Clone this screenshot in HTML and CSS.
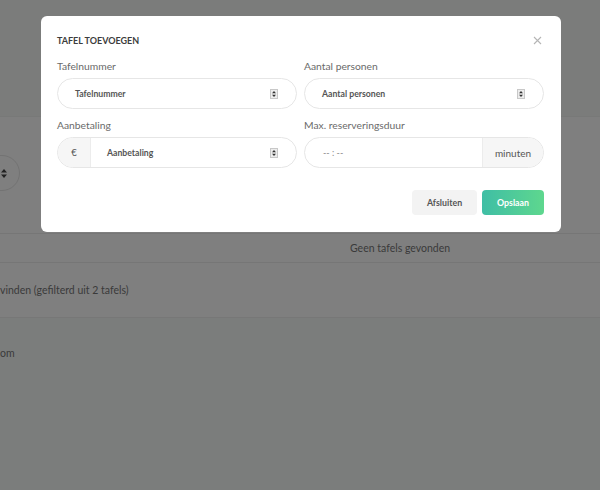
FILE: index.html
```html
<!DOCTYPE html>
<html lang="nl">
<head>
<meta charset="utf-8">
<title>Tafel toevoegen</title>
<link rel="stylesheet" href="styles.css">
</head>
<body>
<div class="page">
  <div class="band band-top"></div>
  <div class="band band-filter">
    <div class="sort-circle">
      <svg width="6" height="9" viewBox="0 0 6 9"><path d="M3 0L6 3.5H0Z M3 9L0 5.5H6Z" fill="#222"/></svg>
    </div>
  </div>
  <div class="row row-empty"><span class="empty-text">Geen tafels gevonden</span></div>
  <div class="row row-info"><span>vinden (gefilterd uit 2 tafels)</span></div>
  <div class="row-foot"><span>om</span></div>
</div>

<div class="modal">
  <div class="modal-head">
    <h2 class="modal-title">TAFEL TOEVOEGEN</h2>
    <span class="close">
      <svg width="9" height="9" viewBox="0 0 9 9"><path d="M1 1L8 8M8 1L1 8" stroke="#b5b5b5" stroke-width="1.1"/></svg>
    </span>
  </div>
  <div class="form-grid">
    <div class="field">
      <label class="label">Tafelnummer</label>
      <div class="input">
        <span class="value">Tafelnummer</span>
        <span class="spin"><svg width="8" height="10" viewBox="0 0 8 10"><rect x="0.5" y="0.5" width="7" height="9" fill="#ececec" stroke="#c8c8c8"/><path d="M4 2L6 4.2H2Z M4 8L2 5.8H6Z" fill="#333"/></svg></span>
      </div>
    </div>
    <div class="field">
      <label class="label">Aantal personen</label>
      <div class="input">
        <span class="value">Aantal personen</span>
        <span class="spin"><svg width="8" height="10" viewBox="0 0 8 10"><rect x="0.5" y="0.5" width="7" height="9" fill="#ececec" stroke="#c8c8c8"/><path d="M4 2L6 4.2H2Z M4 8L2 5.8H6Z" fill="#333"/></svg></span>
      </div>
    </div>
    <div class="field">
      <label class="label">Aanbetaling</label>
      <div class="input group">
        <span class="addon addon-left">€</span>
        <span class="value value-addon">Aanbetaling</span>
        <span class="spin"><svg width="8" height="10" viewBox="0 0 8 10"><rect x="0.5" y="0.5" width="7" height="9" fill="#ececec" stroke="#c8c8c8"/><path d="M4 2L6 4.2H2Z M4 8L2 5.8H6Z" fill="#333"/></svg></span>
      </div>
    </div>
    <div class="field">
      <label class="label">Max. reserveringsduur</label>
      <div class="input group">
        <span class="value value-time">-- : --</span>
        <span class="addon addon-right">minuten</span>
      </div>
    </div>
  </div>
  <div class="actions">
    <button class="btn btn-close">Afsluiten</button>
    <button class="btn btn-save">Opslaan</button>
  </div>
</div>
</body>
</html>
```

FILE: styles.css
```css
* { box-sizing: border-box; }
html, body { margin: 0; padding: 0; }
body {
  width: 600px;
  height: 490px;
  overflow: hidden;
  background: #7b7d7c;
  font-family: Lato, "Open Sans", Arial, sans-serif;
  position: relative;
}
.page { display: flex; flex-direction: column; }
.band-top { height: 117px; background: #7b7c7b; border-bottom: 1px solid #787978; }
.band-filter {
  height: 116px;
  background: #7f7f7f;
  display: flex;
  align-items: flex-start;
  padding-top: 38px;
}
.sort-circle {
  width: 40px;
  height: 36px;
  margin-left: -20px;
  border: 1px solid #737373;
  border-radius: 18px;
  display: flex;
  align-items: center;
  justify-content: flex-end;
  padding-right: 12px;
}
.row {
  border-top: 1px solid #767676;
  background: #7f7f7f;
  color: #3a3a3a;
  font-size: 10.5px;
  display: flex;
  align-items: center;
}
.row-empty { height: 29px; padding-left: 350px; }
.row-info { height: 56px; border-bottom: 1px solid #777; }
.row-foot {
  color: #3a3a3a;
  font-size: 10.5px;
  padding-top: 29px;
}

.modal {
  position: absolute;
  left: 41px;
  top: 16px;
  width: 520px;
  height: 216px;
  background: #fff;
  border-radius: 6px;
  padding: 16px 17px 0 16px;
}
.modal-head {
  display: flex;
  justify-content: space-between;
  align-items: center;
  height: 16px;
}
.modal-title {
  margin: 0;
  font-size: 9px;
  font-weight: 700;
  color: #3d3d3d;
  letter-spacing: 0;
}
.close { display: flex; margin-right: 2px; }
.form-grid {
  display: grid;
  grid-template-columns: 240px 240px;
  column-gap: 7px;
  row-gap: 9px;
  margin-top: 11px;
}
.field { display: flex; flex-direction: column; }
.label {
  font-size: 10.3px;
  color: #6a6a6a;
  height: 14px;
  line-height: 14px;
  margin-bottom: 5px;
}
.input {
  height: 31px;
  border: 1px solid #e6e6e6;
  border-radius: 16px;
  display: flex;
  align-items: center;
  overflow: hidden;
}
.value {
  flex: 1;
  font-size: 8.7px;
  font-weight: 700;
  color: #555;
  padding-left: 17px;
}
.spin { display: flex; margin-right: 18px; }
.addon {
  height: 100%;
  background: #f6f6f6;
  display: flex;
  align-items: center;
  justify-content: center;
  font-size: 9.5px;
  color: #555;
}
.addon-left { width: 33px; border-right: 1px solid #ececec; }
.value-addon { padding-left: 16px; }
.addon-right { width: 61px; border-left: 1px solid #ececec; font-size: 10px; }
.value-time { font-weight: 400; color: #888; padding-left: 18px; font-size: 9px; }
.actions {
  display: flex;
  justify-content: flex-end;
  gap: 5px;
  margin-top: 22px;
}
.btn {
  height: 25px;
  border: none;
  border-radius: 4px;
  font-family: Lato, "Open Sans", Arial, sans-serif;
  font-size: 8.8px;
  font-weight: 700;
}
.btn-close { width: 65px; background: #f3f3f3; color: #555; }
.btn-save {
  width: 62px;
  color: #fff;
  background: linear-gradient(90deg, #3fbea5, #5ed78e);
}
```
